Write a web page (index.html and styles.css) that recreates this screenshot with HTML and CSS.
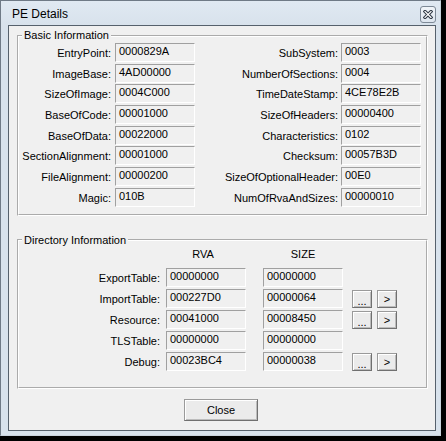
FILE: index.html
```html
<!DOCTYPE html>
<html>
<head>
<meta charset="utf-8">
<title>PE Details</title>
<link rel="stylesheet" href="styles.css">
</head>
<body>
<div class="window">
  <div class="titlebar">
    <span class="title">PE Details</span>
    <button class="tclose" aria-label="Close">
      <svg width="10" height="9" viewBox="0 0 10 9">
        <path d="M2 1.5 L8 7.5 M8 1.5 L2 7.5" stroke="#2f3945" stroke-width="3.2" stroke-linecap="square" fill="none"/>
        <path d="M2 1.5 L8 7.5 M8 1.5 L2 7.5" stroke="#ffffff" stroke-width="1.2" stroke-linecap="square" fill="none"/>
      </svg>
    </button>
  </div>
  <div class="client">
    <fieldset class="group basic">
      <legend>Basic Information</legend>
      <div class="basic-grid">
        <span class="lbl l1">EntryPoint:</span><span class="box">0000829A</span><span class="lbl l2">SubSystem:</span><span class="box">0003</span>
        <span class="lbl l1">ImageBase:</span><span class="box">4AD00000</span><span class="lbl l2">NumberOfSections:</span><span class="box">0004</span>
        <span class="lbl l1">SizeOfImage:</span><span class="box">0004C000</span><span class="lbl l2">TimeDateStamp:</span><span class="box">4CE78E2B</span>
        <span class="lbl l1">BaseOfCode:</span><span class="box">00001000</span><span class="lbl l2">SizeOfHeaders:</span><span class="box">00000400</span>
        <span class="lbl l1">BaseOfData:</span><span class="box">00022000</span><span class="lbl l2">Characteristics:</span><span class="box">0102</span>
        <span class="lbl l1">SectionAlignment:</span><span class="box">00001000</span><span class="lbl l2">Checksum:</span><span class="box">00057B3D</span>
        <span class="lbl l1">FileAlignment:</span><span class="box">00000200</span><span class="lbl l2">SizeOfOptionalHeader:</span><span class="box">00E0</span>
        <span class="lbl l1">Magic:</span><span class="box">010B</span><span class="lbl l2">NumOfRvaAndSizes:</span><span class="box">00000010</span>
      </div>
    </fieldset>
    <fieldset class="group dir">
      <legend>Directory Information</legend>
      <div class="dir-grid">
        <span></span><span class="hdr hdr-rva">RVA</span><span class="hdr hdr-size">SIZE</span><span></span><span></span>

        <span class="lbl dl">ExportTable:</span><span class="box">00000000</span><span class="box sz">00000000</span><span></span><span></span>
        <span class="lbl dl">ImportTable:</span><span class="box">000227D0</span><span class="box sz">00000064</span><button class="btn sm b1">...</button><button class="btn sm b2">&gt;</button>
        <span class="lbl dl">Resource:</span><span class="box">00041000</span><span class="box sz">00008450</span><button class="btn sm b1">...</button><button class="btn sm b2">&gt;</button>
        <span class="lbl dl">TLSTable:</span><span class="box">00000000</span><span class="box sz">00000000</span><span></span><span></span>
        <span class="lbl dl">Debug:</span><span class="box">00023BC4</span><span class="box sz">00000038</span><button class="btn sm b1">...</button><button class="btn sm b2">&gt;</button>
      </div>
    </fieldset>
    <div class="actions">
      <button class="btn close">Close</button>
    </div>
  </div>
</div>
</body>
</html>
```
FILE: styles.css
```css
* { box-sizing: border-box; }
html, body { margin: 0; padding: 0; }
body {
  background: #000;
  width: 446px;
  height: 441px;
  overflow: hidden;
  font-family: "Liberation Sans", Arial, sans-serif;
  font-size: 11px;
  color: #000;
}
.window {
  width: 441px;
  height: 436px;
  border: 1px solid #6f7a86;
  border-right-color: #c9d3dd;
  border-bottom-color: #c9d3dd;
  background: #d8e2ec;
  display: flex;
  flex-direction: column;
}
.titlebar {
  height: 24px;
  flex: none;
  display: flex;
  align-items: flex-start;
  padding: 0 4px 0 11px;
  background: linear-gradient(#e0e9f2, #d8e2ec);
}
.title {
  flex: 1;
  font-size: 12px;
  line-height: 15px;
  margin-top: 6px;
}
.tclose {
  margin-top: 5px;
  width: 16px;
  height: 17px;
  padding: 0;
  border: 1px solid #7d8996;
  border-radius: 3px;
  background: linear-gradient(#f1f5f9, #dde5ee);
  display: flex;
  align-items: center;
  justify-content: center;
}
.client {
  margin: 0 4px 0 7px;
  height: 406px;
  border: 1px solid #56616c;
  background: #f0f0f0;
  padding: 3px 7px 0 8px;
  display: flex;
  flex-direction: column;
}
.group {
  margin: 0;
  padding: 0;
  width: 411px;
  min-width: 0;
  border: 2px groove #ffffff;
}
.group legend {
  margin-left: 3px;
  padding: 0 2px;
  font-size: 11px;
  line-height: 13px;
}
.lbl {
  text-align: right;
  white-space: nowrap;
  line-height: 13px;
  padding-top: 4px;
}
.box {
  height: 19px;
  border: 1px solid;
  border-color: #a0a0a0 #ffffff #ffffff #a0a0a0;
  padding: 1px 3px 0;
  line-height: 13px;
  white-space: nowrap;
  background: #f0f0f0;
}
.basic-grid {
  display: grid;
  grid-template-columns: 96px 80px 146px 80px;
  row-gap: 1.7px;
  padding: 1px 0 7px 0;
}
.l1 { padding-right: 4px; }
.l2 { padding-right: 3px; }

.dir { margin-top: 18px; }
.dir-grid {
  display: grid;
  grid-template-columns: 147px 80px 97px 29px 25px;
  row-gap: 2px;
  padding: 0 0 15.7px 0;
}
.dl { padding-right: 6px; }
.hdr {
  text-align: center;
  line-height: 13px;
  padding-top: 1.5px;
  height: 19.3px;
}
.hdr-rva { padding-right: 6px; }
.hdr-size { padding-left: 17px; }
.sz { margin-left: 17px; }

.btn {
  font-family: "Liberation Sans", Arial, sans-serif;
  font-size: 11px;
  color: #000;
  padding: 0;
  border: 1px solid #707070;
  border-top-color: #9a9a9a;
  border-left-color: #9a9a9a;
  background: #ebebeb;
  box-shadow: inset 1px 1px 0 #ffffff, inset -1px -1px 0 #bcbcbc;
}
.sm {
  width: 20px;
  height: 18px;
  margin-top: 1px;
  line-height: 14px;
}
.b1 { margin-left: 9px; line-height: 20px; }
.b2 { margin-left: 5px; }

.actions {
  display: flex;
  justify-content: center;
  padding-right: 3px;
  margin-top: 10px;
}
.close {
  width: 74px;
  height: 22px;
}
```
